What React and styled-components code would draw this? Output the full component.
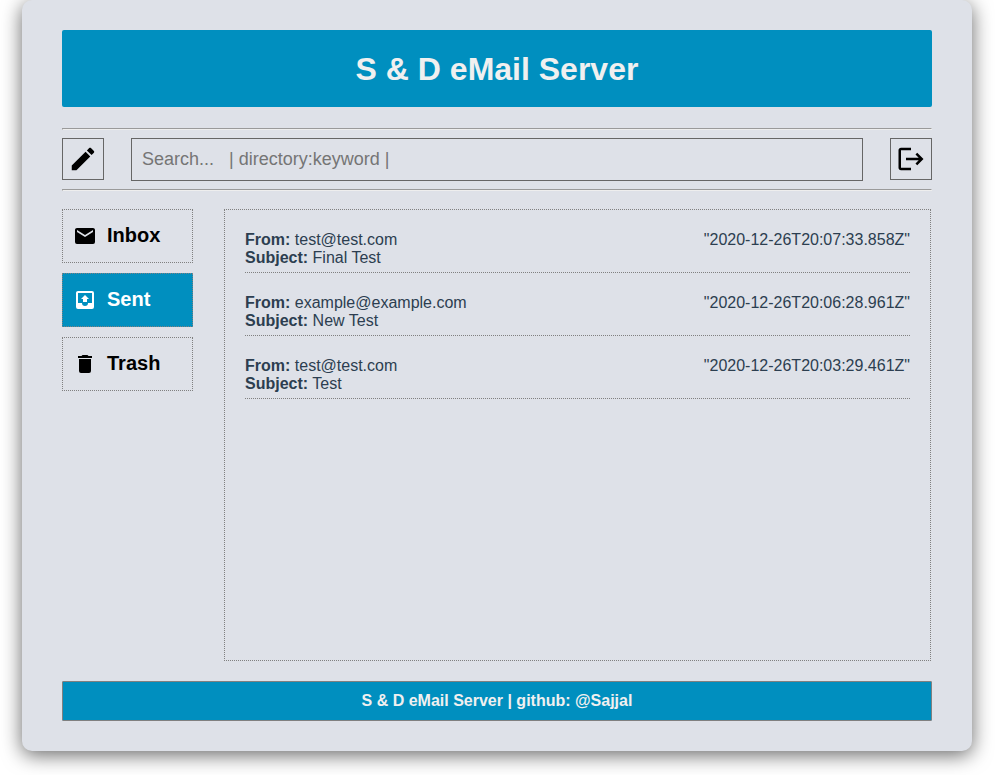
import React from "react";
import styled, { createGlobalStyle, css } from "styled-components";

const GlobalStyle = createGlobalStyle`
  *, *::before, *::after { box-sizing: border-box; }
  html, body { margin: 0; background: #fff; }
  body {
    height: 775px;
    overflow: hidden;
    font-family: "Liberation Sans", Arial, Helvetica, sans-serif;
    font-size: 16px;
    color: #2c3e50;
    -webkit-font-smoothing: antialiased;
  }
`;

const Panel = styled.div`
  width: 950px;
  height: 751px;
  margin: 0 0 0 22px;
  padding: 30px 40px;
  border-radius: 10px;
  background: #dee1e8;
  box-shadow: 0 4px 20px rgba(0, 0, 0, 0.6);
  display: flex;
  flex-direction: column;
`;

const Header = styled.header`
  height: 77px;
  margin-bottom: 21px;
  flex: none;
  display: flex;
  align-items: center;
  justify-content: center;
  border-radius: 2px;
  background: #008fbf;
`;

const Title = styled.h1`
  margin: 0;
  padding-top: 2px;
  font-size: 32px;
  line-height: 37px;
  color: #f0f0f0;
`;

const Divider = styled.hr`
  width: 100%;
  height: 2px;
  margin: 0;
  flex: none;
  border: 1px solid;
  border-color: #9a9a9a #eeeeee #eeeeee #9a9a9a;
`;

const Toolbar = styled.div`
  display: flex;
  align-items: flex-start;
  height: 59px;
  flex: none;
  padding-top: 8px;
  gap: 27px;
`;

const IconButton = styled.button`
  width: 42px;
  height: 42px;
  flex: none;
  padding: 0;
  display: flex;
  align-items: center;
  justify-content: center;
  border: 1px solid #666;
  background: transparent;
  color: #000;
`;

const SearchInput = styled.input`
  flex: 1;
  min-width: 0;
  height: 43px;
  padding: 0 10px 1px;
  border: 1px solid #666;
  border-radius: 0;
  background: transparent;
  font-family: inherit;
  font-size: 18px;
  outline: none;
  &::placeholder { color: #757575; opacity: 1; }
`;

const Main = styled.main`
  display: flex;
  gap: 31px;
  height: 452px;
  margin: 18px 0 20px;
  padding-right: 1px;
  flex: none;
`;

const Sidebar = styled.nav`
  width: 131px;
  flex: none;
  display: flex;
  flex-direction: column;
  gap: 10px;
`;

const FolderItem = styled.a`
  height: 54px;
  padding: 0 0 0 10px;
  display: flex;
  align-items: center;
  gap: 10px;
  border: 1px dotted #808080;
  color: #000;
  ${({ $active }) =>
    $active &&
    css`
      background: #008fbf;
      color: #fff;
    `}
`;

const FolderName = styled.span`
  font-size: 20px;
  font-weight: bold;
  line-height: 24px;
  padding-bottom: 2px;
`;

const MailList = styled.section`
  flex: 1;
  padding: 0 20px;
  border: 1px dotted #808080;
`;

const MailRow = styled.article`
  height: 63px;
  padding-top: 21px;
  display: flex;
  justify-content: space-between;
  border-bottom: 1px dotted #808080;
  line-height: 18px;
`;

const Line = styled.div`
  white-space: nowrap;
`;

const Footer = styled.footer`
  height: 40px;
  flex: none;
  display: flex;
  align-items: center;
  justify-content: center;
  padding-bottom: 1px;
  border: 1px solid #808080;
  border-radius: 1px;
  background: #008fbf;
  color: #f0f0f0;
  font-weight: bold;
`;

const Svg = styled.svg`
  width: ${({ $size }) => $size}px;
  height: ${({ $size }) => $size}px;
  flex: none;
  display: block;
  fill: currentColor;
`;

const paths = {
  pencil:
    "M20.71,7.04C21.1,6.65 21.1,6 20.71,5.63L18.37,3.29C18,2.9 17.35,2.9 16.96,3.29L15.12,5.12L18.87,8.87M3,17.25V21H6.75L17.81,9.93L14.06,6.18L3,17.25Z",
  logout:
    "M17 7L15.59 8.41L18.17 11H8V13H18.17L15.59 15.58L17 17L22 12M4 5H12V3H4C2.9 3 2 3.9 2 5V19C2 20.1 2.9 21 4 21H12V19H4V5Z",
  email:
    "M20,8L12,13L4,8V6L12,11L20,6M20,4H4C2.89,4 2,4.89 2,6V18A2,2 0 0,0 4,20H20A2,2 0 0,0 22,18V6C22,4.89 21.1,4 20,4Z",
  sent:
    "M14,14H10V11H8L12,7L16,11H14V14M5,15V5H19V15H15A3,3 0 0,1 12,18A3,3 0 0,1 9,15H5M19,3H5C3.89,3 3,3.9 3,5V19A2,2 0 0,0 5,21H19A2,2 0 0,0 21,19V5A2,2 0 0,0 19,3Z",
  trash:
    "M19,4H15.5L14.5,3H9.5L8.5,4H5V6H19M6,19A2,2 0 0,0 8,21H16A2,2 0 0,0 18,19V7H6V19Z",
};

const Icon = ({ name, size = 24 }) => (
  <Svg $size={size} viewBox="0 0 24 24" aria-hidden="true">
    <path d={paths[name]} />
  </Svg>
);

const folders = [
  { name: "Inbox", icon: "email" },
  { name: "Sent", icon: "sent", active: true },
  { name: "Trash", icon: "trash" },
];

const mails = [
  { from: "test@test.com", subject: "Final Test", date: "2020-12-26T20:07:33.858Z" },
  { from: "example@example.com", subject: "New Test", date: "2020-12-26T20:06:28.961Z" },
  { from: "test@test.com", subject: "Test", date: "2020-12-26T20:03:29.461Z" },
];

export default function App() {
  return (
    <>
      <GlobalStyle />
      <Panel>
        <Header>
          <Title>S &amp; D eMail Server</Title>
        </Header>
        <Divider />
        <Toolbar>
          <IconButton aria-label="Compose">
            <Icon name="pencil" size={30} />
          </IconButton>
          <SearchInput placeholder={"Search...\u00a0\u00a0 | directory:keyword |"} />
          <IconButton aria-label="Log out">
            <Icon name="logout" size={30} />
          </IconButton>
        </Toolbar>
        <Divider />
        <Main>
          <Sidebar>
            {folders.map((f) => (
              <FolderItem key={f.name} $active={f.active}>
                <Icon name={f.icon} />
                <FolderName>{f.name}</FolderName>
              </FolderItem>
            ))}
          </Sidebar>
          <MailList>
            {mails.map((m) => (
              <MailRow key={m.date}>
                <div>
                  <Line><b>From:</b> {m.from}</Line>
                  <Line><b>Subject:</b> {m.subject}</Line>
                </div>
                <Line>{`"${m.date}"`}</Line>
              </MailRow>
            ))}
          </MailList>
        </Main>
        <Footer>S &amp; D eMail Server | github: @Sajjal</Footer>
      </Panel>
    </>
  );
}
